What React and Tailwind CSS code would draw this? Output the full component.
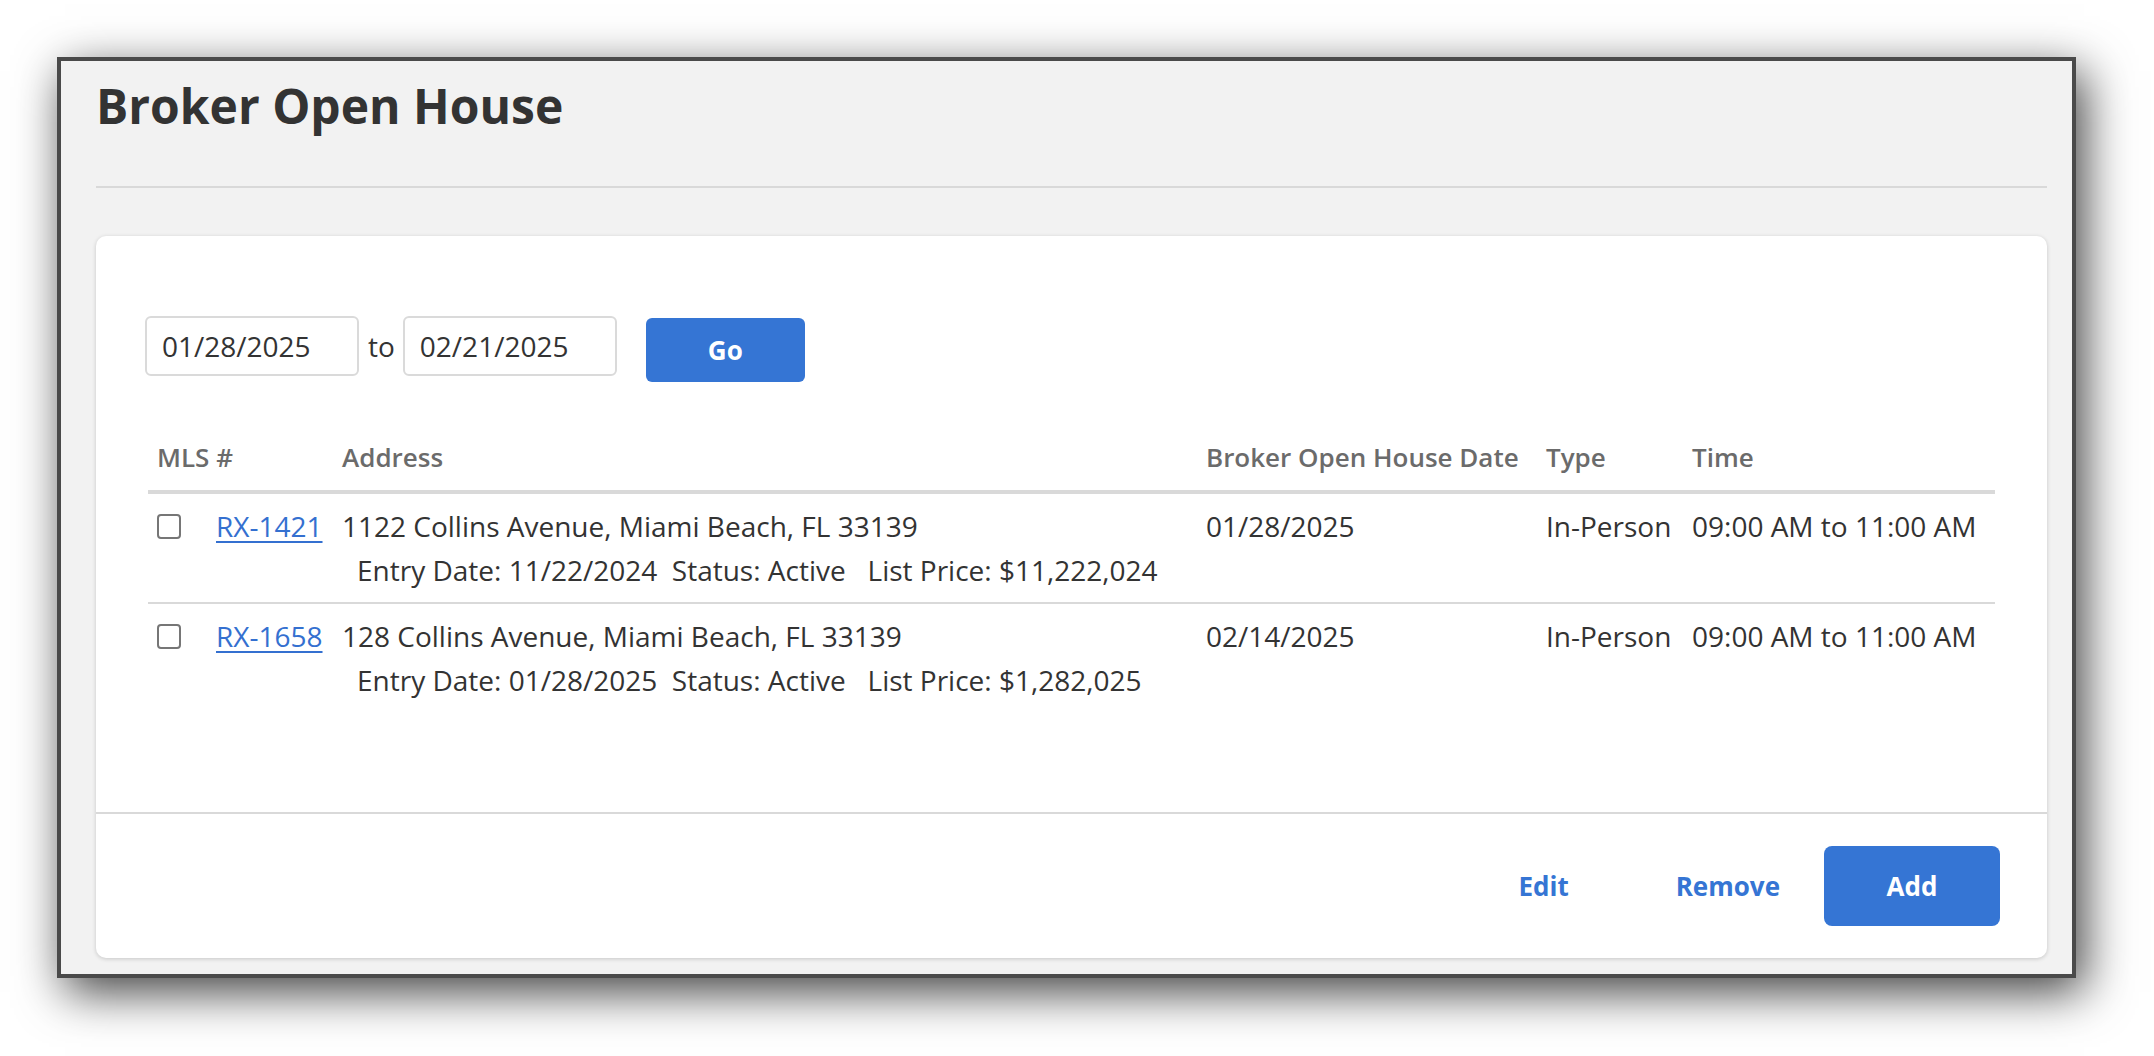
import { useState } from "react";

const rows = [
  {
    id: "RX-1421",
    address: "1122 Collins Avenue, Miami Beach, FL 33139",
    entry: "11/22/2024",
    status: "Active",
    price: "$11,222,024",
    date: "01/28/2025",
    type: "In-Person",
    time: "09:00 AM to 11:00 AM",
  },
  {
    id: "RX-1658",
    address: "128 Collins Avenue, Miami Beach, FL 33139",
    entry: "01/28/2025",
    status: "Active",
    price: "$1,282,025",
    date: "02/14/2025",
    type: "In-Person",
    time: "09:00 AM to 11:00 AM",
  },
];

const gridCols = "grid grid-cols-[59px_126px_864px_340px_146px_1fr] px-[9px]";

function DateInput({ value }) {
  return (
    <input
      type="text"
      defaultValue={value}
      className="h-[60px] w-[214px] rounded-[6px] border-2 border-[#dadada] bg-white pl-[15px] text-[28px] text-[#333] outline-none"
    />
  );
}

export default function App() {
  const [checked, setChecked] = useState({});

  const toggle = (id) => setChecked((prev) => ({ ...prev, [id]: !prev[id] }));

  return (
    <div className="min-h-screen bg-white p-[57px] font-['Open_Sans',sans-serif]">
      <div className="flex h-[921px] w-[2019px] flex-col border-4 border-[#4a4a4a] bg-[#f2f2f2] pl-[35px] pr-[25px] shadow-[8px_14px_45px_rgba(0,0,0,0.75)]">
        <h1 className="mt-[15px] text-[48px] font-bold leading-[60px] text-[#333]">
          Broker Open House
        </h1>
        <div className="mt-[50px] h-[2px] bg-[#d9d9d9]" />

        <div className="mt-[48px] rounded-[10px] bg-white shadow-[0_1px_4px_rgba(0,0,0,0.18)]">
          <div className="h-[576px] px-[52px] pt-[80px]">
            {/* date filter */}
            <div className="-ml-[3px] flex items-start">
              <DateInput value="01/28/2025" />
              <span className="ml-[9px] mr-[8px] text-[28px] leading-[60px] text-[#333]">to</span>
              <DateInput value="02/21/2025" />
              <button className="ml-[29px] mt-[2px] h-[64px] w-[159px] rounded-[6px] bg-[#3575d4] text-[26px] font-bold text-white">
                Go
              </button>
            </div>

            {/* table */}
            <div className="mt-[53px] text-[28px] leading-[44px]">
              <div className={`${gridCols} border-b-4 border-[#d9d9d9] pb-[11px] text-[26px] font-semibold text-[#6b6b6b]`}>
                <div className="col-span-2">MLS #</div>
                <div>Address</div>
                <div className="whitespace-nowrap">Broker Open House Date</div>
                <div>Type</div>
                <div>Time</div>
              </div>
              {rows.map((row, i) => (
                <div
                  key={row.id}
                  className={`${gridCols} py-[10px] text-[#333] ${i < rows.length - 1 ? "border-b-2 border-[#d9d9d9]" : ""}`}
                >
                  <div className="flex h-[44px] items-center">
                    <button
                      onClick={() => toggle(row.id)}
                      className="flex h-[25px] w-[24px] items-center justify-center rounded-[4px] border-2 border-[#767676] bg-white"
                    >
                      {checked[row.id] && <span className="h-[12px] w-[12px] bg-[#3575d4]" />}
                    </button>
                  </div>
                  <div>
                    <a
                      href="#"
                      className="text-[#3470d0] underline decoration-[2px] underline-offset-[4px]"
                    >
                      {row.id}
                    </a>
                  </div>
                  <div>
                    <div className="whitespace-nowrap">{row.address}</div>
                    <div className="whitespace-pre pl-[15px]">
                      {`Entry Date: ${row.entry}  Status: ${row.status}   List Price: ${row.price}`}
                    </div>
                  </div>
                  <div>{row.date}</div>
                  <div className="whitespace-nowrap">{row.type}</div>
                  <div className="whitespace-nowrap">{row.time}</div>
                </div>
              ))}
            </div>
          </div>

          {/* footer */}
          <div className="flex h-[146px] items-center justify-end border-t-2 border-[#d9d9d9] pr-[47px] text-[26px] font-bold">
            <button className="text-[#3575d4]">Edit</button>
            <button className="ml-[107px] text-[#3575d4]">Remove</button>
            <button className="ml-[44px] h-[80px] w-[176px] rounded-[8px] bg-[#3575d4] text-white">
              Add
            </button>
          </div>
        </div>
      </div>
    </div>
  );
}
